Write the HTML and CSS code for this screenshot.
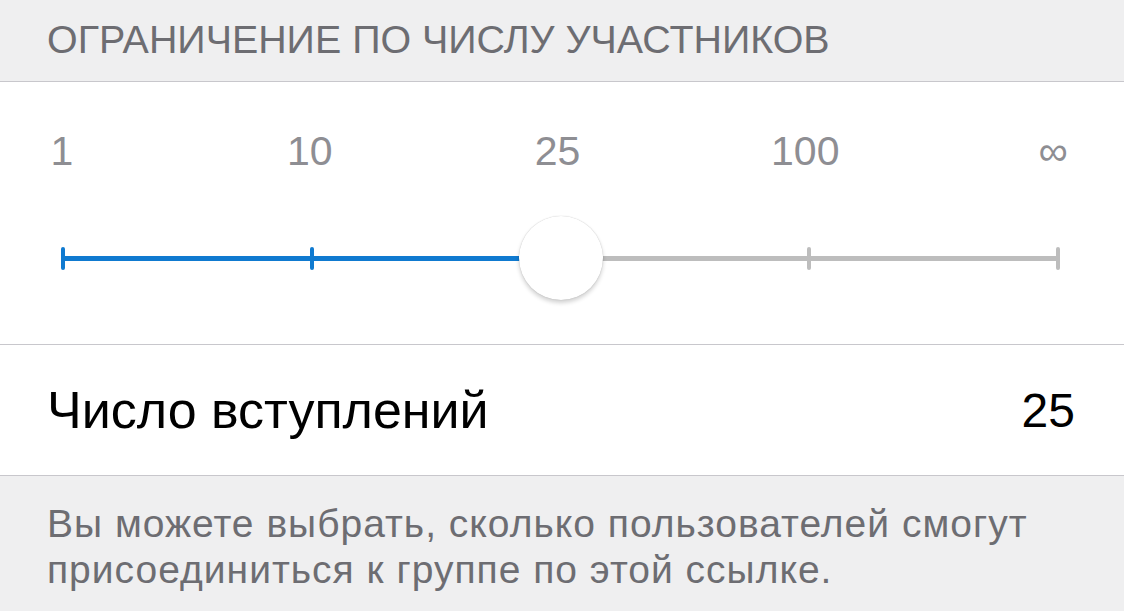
FILE: index.html
```html
<!DOCTYPE html>
<html lang="ru">
<head>
    <meta charset="UTF-8">
    <meta name="viewport" content="width=device-width, initial-scale=1.0">
    <title>Ограничение по числу участников</title>
    <link rel="stylesheet" href="styles.css">
</head>
<body>
    <div class="section-header">ОГРАНИЧЕНИЕ ПО ЧИСЛУ УЧАСТНИКОВ</div>

    <div class="slider-card">
        <div class="slider-labels">
            <span class="slider-label">1</span>
            <span class="slider-label">10</span>
            <span class="slider-label">25</span>
            <span class="slider-label">100</span>
            <span class="slider-label">∞</span>
        </div>
        <div class="slider">
            <div class="track">
                <div class="track-fill" style="width: 50%"></div>
                <span class="tick on" style="left: 0%"></span>
                <span class="tick on" style="left: 25%"></span>
                <span class="tick" style="left: 75%"></span>
                <span class="tick" style="left: 100%"></span>
                <div class="thumb" style="left: 50%"></div>
            </div>
        </div>
    </div>

    <div class="row">
        <span class="row-title">Число вступлений</span>
        <span class="row-value">25</span>
    </div>

    <div class="footer-note">
        Вы можете выбрать, сколько пользователей смогут присоединиться к группе по этой ссылке.
    </div>
</body>
</html>
```

FILE: styles.css
```css
body {
    font-family: 'Liberation Sans', Arial, sans-serif;
    background-color: #efeff0;
    margin: 0;
    padding: 0;
    overflow: hidden;
}

.section-header {
    height: 62px;
    padding: 19px 0 0 47px;
    font-size: 39.4px;
    line-height: 40px;
    color: #6d6d72;
    border-bottom: 1px solid #c8c7cc;
}

.slider-card {
    background-color: #ffffff;
    height: 263px;
    border-bottom: 1px solid #c8c7cc;
    box-sizing: border-box;
    padding-top: 46px;
}

.slider-labels {
    display: flex;
    justify-content: space-between;
    margin: 0 21px 0 12px;
}

.slider-label {
    width: 100px;
    text-align: center;
    font-size: 41px;
    line-height: 46px;
    color: #8e8e93;
}

.slider {
    padding: 0 66px 0 63px;
    margin-top: 82px;
}

.track {
    position: relative;
    height: 5px;
    border-radius: 2px;
    background-color: #bdbdbd;
}

.track-fill {
    height: 100%;
    border-radius: 2px;
    background-color: #0f7ad0;
}

.tick {
    position: absolute;
    top: -9px;
    width: 4px;
    height: 23px;
    margin-left: -2px;
    border-radius: 2px;
    background-color: #bdbdbd;
}

.tick.on {
    background-color: #0f7ad0;
}

.thumb {
    position: absolute;
    top: -40px;
    width: 84px;
    height: 84px;
    margin-left: -42px;
    border-radius: 50%;
    background-color: #ffffff;
    box-shadow: 0 3px 4px rgba(0, 0, 0, 0.18), 0 0 1px rgba(0, 0, 0, 0.25);
}

.row {
    display: flex;
    justify-content: space-between;
    align-items: center;
    height: 130px;
    padding: 0 49px 0 47px;
    background-color: #ffffff;
    border-bottom: 1px solid #c8c7cc;
    font-size: 48px;
    color: #000000;
}

.row-title {
    font-size: 52px;
}

.footer-note {
    padding: 25px 47px 0 47px;
    font-size: 39px;
    letter-spacing: 1px;
    line-height: 46px;
    color: #6d6d72;
}
```
